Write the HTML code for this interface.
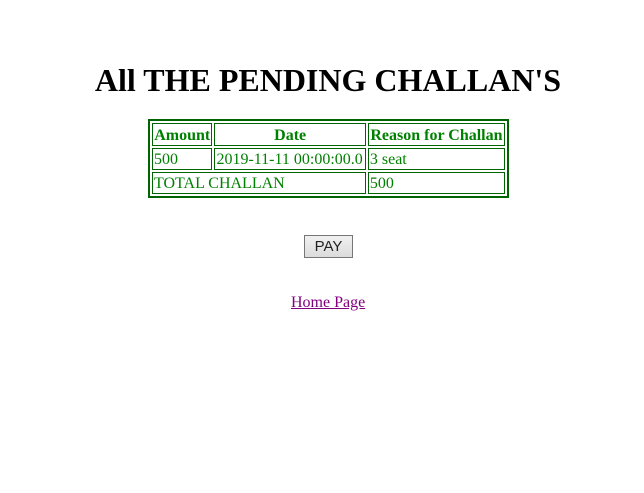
<!DOCTYPE html>
<html><head><style>
body{margin:0;width:644px;height:493px;background:#fff;font-family:"Liberation Serif",serif;position:relative}
h1{position:absolute;left:12px;width:632px;top:62px;margin:0;text-align:center;font-size:32px;line-height:37px;font-weight:bold;color:#000;font-family:"Liberation Serif",serif}
table{position:absolute;left:148px;top:119px;width:361px;border:2px solid #006400;border-spacing:2px;color:#008000;font-size:16px}
td,th{border:1px solid #006400;padding:2px 1px 0 1px;height:18px;line-height:18px;white-space:nowrap;box-sizing:content-box}
th{font-weight:bold;height:19px;line-height:19px}
td{text-align:left}
.btn{position:absolute;left:304px;top:235px;width:49px;height:23px;box-sizing:border-box;border:1px solid #767676;background:linear-gradient(#f0f0f0,#dcdcdc);font-family:"Liberation Sans",sans-serif;font-size:15px;color:#222;text-align:center;line-height:22px}
a{position:absolute;left:291px;top:294px;color:#800080;font-size:16px;text-decoration:underline}
</style></head><body>
<h1>All THE PENDING CHALLAN'S</h1>
<table>
<tr><th>Amount</th><th>Date</th><th>Reason for Challan</th></tr>
<tr><td>500</td><td>2019-11-11 00:00:00.0</td><td>3 seat</td></tr>
<tr><td colspan="2">TOTAL CHALLAN</td><td>500</td></tr>
</table>
<div class="btn">PAY</div>
<a>Home Page</a>
</body></html>
